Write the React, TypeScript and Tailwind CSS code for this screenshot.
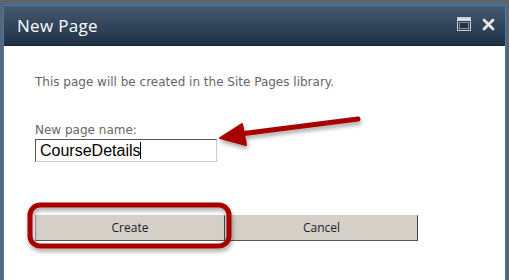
import React from 'react';

const MaxIcon = () => (
  <svg width="14" height="14" viewBox="0 0 14 14">
    <rect x="0.5" y="0.5" width="13" height="13" fill="#2b3d52" stroke="#c9ced4" />
    <rect x="1" y="1" width="12" height="3" fill="#d8dce0" />
    <rect x="2.5" y="5.5" width="9" height="6" fill="#1f3045" stroke="#8a939d" />
  </svg>
);

const CloseIcon = () => (
  <svg width="13" height="13" viewBox="0 0 13 13">
    <path d="M2 2 L11 11 M11 2 L2 11" stroke="#3a4654" strokeWidth="4.2" strokeLinecap="round" />
    <path d="M2 2 L11 11 M11 2 L2 11" stroke="#e6e8ea" strokeWidth="2.8" strokeLinecap="round" />
  </svg>
);

const Annotations = () => (
  <svg className="absolute left-0 top-0 pointer-events-none" width="509" height="280" viewBox="0 0 509 280">
    <defs>
      <filter id="sh" x="-20%" y="-40%" width="140%" height="180%">
        <feDropShadow dx="1" dy="3" stdDeviation="2" floodColor="#000" floodOpacity="0.35" />
      </filter>
    </defs>
    <g filter="url(#sh)">
      <rect x="30" y="205" width="199" height="41" rx="10" fill="none" stroke="#a80000" strokeWidth="5" />
      <path d="M358 119 L240 134" stroke="#a80000" strokeWidth="5" strokeLinecap="round" />
      <path d="M220 138 L242 124 L246 145 Z" fill="#a80000" stroke="#a80000" strokeWidth="2" strokeLinejoin="round" />
    </g>
  </svg>
);

export default function App() {
  return (
    <div className="relative w-[509px] h-[280px] overflow-hidden bg-[#5e646c] pt-[5px] px-[3px]">
      <div className="h-full border-x border-t border-[#2f7fd0] flex flex-col bg-white">
        <div className="h-[40px] shrink-0 flex items-center justify-between pl-[13px] pr-[10px] bg-gradient-to-b from-[#46596e] to-[#1f3248] border-b border-[#17283b]">
          <span className="text-[17px] text-white tracking-[0.3px]" style={{ fontFamily: '"Open Sans", sans-serif' }}>New Page</span>
          <div className="flex items-center gap-[11px] pb-[3px]">
            <MaxIcon />
            <CloseIcon />
          </div>
        </div>
        <div className="flex flex-col pl-[31px]" style={{ fontFamily: '"DejaVu Sans", Verdana, sans-serif' }}>
          <p className="mt-[29px] text-[12px] text-[#666] leading-[15px]">This page will be created in the Site Pages library.</p>
          <label className="mt-[33px] text-[12px] text-[#666] leading-[15px]">New page name:</label>
          <div className="mt-[1px] w-[182px] h-[23px] border border-t-[#555] border-l-[#555] border-b-[#ccc] border-r-[#ccc] flex items-center pl-[4px]">
            <span className="text-[16px] text-black leading-none" style={{ fontFamily: '"Liberation Sans", Arial, sans-serif' }}>CourseDetails</span>
            <span className="w-px h-[17px] bg-black" />
          </div>
          <div className="mt-[53px] flex" style={{ fontFamily: '"Open Sans", sans-serif' }}>
            <button className="w-[190px] h-[26px] bg-[#d4d0c8] border border-l-[#999] border-t-[#d4d0c8] border-r-[#444] border-b-[#555] text-[12px] text-[#1a1a2a]">Create</button>
            <button className="w-[193px] h-[26px] bg-[#d4d0c8] border border-l-[#d4d0c8] border-t-[#d4d0c8] border-r-[#444] border-b-[#555] text-[12px] text-[#1a1a2a]">Cancel</button>
          </div>
        </div>
      </div>
      <Annotations />
    </div>
  );
}
